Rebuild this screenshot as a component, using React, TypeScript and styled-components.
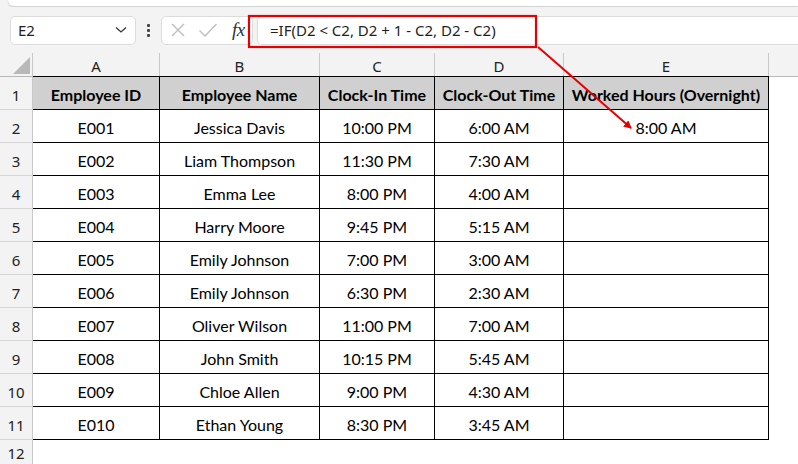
import React from "react";
import styled, { createGlobalStyle } from "styled-components";

const GlobalStyle = createGlobalStyle`
  html, body {
    margin: 0;
    padding: 0;
    background: #ffffff;
  }
  #root {
    width: 798px;
    height: 464px;
    overflow: hidden;
  }
`;

const Page = styled.div`
  position: relative;
  width: 798px;
  height: 464px;
  overflow: hidden;
  background: #ffffff;
  font-family: "Noto Sans", "Open Sans", sans-serif;
`;

const RibbonStrip = styled.div`
  height: 7px;
  background: #f3f3f3;
  padding-left: 8px;
`;

const RibbonEdge = styled.div`
  height: 6px;
  background: #ffffff;
  border-bottom-left-radius: 6px;
  box-shadow: 0 1px 2px rgba(0, 0, 0, 0.18);
`;

const FormulaBar = styled.div`
  display: flex;
  align-items: center;
  height: 46px;
  background: #f3f3f3;
  padding: 0 0 0 10px;
  box-sizing: border-box;
`;

const NameBox = styled.div`
  display: flex;
  align-items: center;
  justify-content: space-between;
  width: 126px;
  height: 29px;
  box-sizing: border-box;
  padding: 0 8px 0 7px;
  background: #ffffff;
  border: 1px solid #dcdcdc;
  border-radius: 5px;
  font-size: 15px;
  color: #1f1f1f;
`;

const Dots = styled.div`
  display: flex;
  flex-direction: column;
  gap: 2px;
  margin: 0 11px;
  span {
    width: 3px;
    height: 3px;
    background: #444;
    border-radius: 1px;
  }
`;

const FxBox = styled.div`
  display: flex;
  align-items: center;
  gap: 12px;
  width: 92px;
  height: 29px;
  box-sizing: border-box;
  padding: 0 6px 0 8px;
  background: #ffffff;
  border: 1px solid #dcdcdc;
  border-radius: 5px;
`;

const Fx = styled.span`
  font-family: "Liberation Serif", serif;
  font-style: italic;
  font-size: 19px;
  color: #333;
  margin-left: 2px;
  letter-spacing: -0.5px;
`;

const FormulaInput = styled.div`
  flex: 1;
  display: flex;
  align-items: center;
  height: 29px;
  margin-left: 4px;
  box-sizing: border-box;
  padding-left: 12px;
  background: #ffffff;
  border: 1px solid #dcdcdc;
  border-right: none;
  border-radius: 5px 0 0 5px;
  font-size: 15px;
  color: #1f1f1f;
`;

const Sheet = styled.div`
  display: grid;
  grid-template-columns: 33px 127px 160px 115px 129px 205px 1fr;
  grid-template-rows: 24px;
  grid-auto-rows: 33px;
`;

const Corner = styled.div`
  background: #f3f3f3;
  border-right: 1px solid #c8c8c8;
  border-bottom: 1px solid #b8b8b8;
  display: flex;
  align-items: flex-end;
  justify-content: flex-end;
  padding: 0 2px 2px 0;
`;

const ColHead = styled.div<{ $last?: boolean }>`
  background: #f3f3f3;
  border-right: ${(p) => (p.$last ? "none" : "1px solid #c8c8c8")};
  border-bottom: 1px solid #b8b8b8;
  display: flex;
  align-items: center;
  justify-content: center;
  font-size: 15px;
  color: #222;
  padding-top: 3px;
`;

const RowHead = styled.div<{ $tail?: boolean }>`
  background: #f3f3f3;
  border-right: 1px solid #c8c8c8;
  border-bottom: 1px solid #d6d6d6;
  display: flex;
  align-items: ${(p) => (p.$tail ? "flex-start" : "center")};
  justify-content: center;
  font-size: 15px;
  line-height: 20px;
  color: #222;
  padding-top: ${(p) => (p.$tail ? "3px" : "4px")};
`;

const Cell = styled.div<{ $head?: boolean; $top?: boolean }>`
  background: ${(p) => (p.$head ? "#d0d0d0" : "#ffffff")};
  border-right: 1px solid #000;
  border-bottom: 1px solid #000;
  margin-top: ${(p) => (p.$top ? "-1px" : "0")};
  border-top: ${(p) => (p.$top ? "1px solid #000" : "none")};
  display: flex;
  align-items: center;
  justify-content: center;
  font-family: "Lato", "Noto Sans", sans-serif;
  font-size: 16px;
  font-weight: ${(p) => (p.$head ? 700 : 400)};
  color: #000;
  white-space: nowrap;
  padding-top: 2px;
`;

const Blank = styled.div`
  background: #ffffff;
`;

const Overlay = styled.svg`
  position: absolute;
  left: 0;
  top: 0;
  pointer-events: none;
`;

const rows = [
  ["E001", "Jessica Davis", "10:00 PM", "6:00 AM", "8:00 AM"],
  ["E002", "Liam Thompson", "11:30 PM", "7:30 AM", ""],
  ["E003", "Emma Lee", "8:00 PM", "4:00 AM", ""],
  ["E004", "Harry Moore", "9:45 PM", "5:15 AM", ""],
  ["E005", "Emily Johnson", "7:00 PM", "3:00 AM", ""],
  ["E006", "Emily Johnson", "6:30 PM", "2:30 AM", ""],
  ["E007", "Oliver Wilson", "11:00 PM", "7:00 AM", ""],
  ["E008", "John Smith", "10:15 PM", "5:45 AM", ""],
  ["E009", "Chloe Allen", "9:00 PM", "4:30 AM", ""],
  ["E010", "Ethan Young", "8:30 PM", "3:45 AM", ""],
];

const headers = [
  "Employee ID",
  "Employee Name",
  "Clock-In Time",
  "Clock-Out Time",
  "Worked Hours (Overnight)",
];

function App() {
  return (
    <Page>
      <GlobalStyle />
      <RibbonStrip>
        <RibbonEdge />
      </RibbonStrip>
      <FormulaBar>
        <NameBox>
          <span>E2</span>
          <svg width="12" height="8" viewBox="0 0 12 8">
            <path d="M1 1.5 L6 6 L11 1.5" fill="none" stroke="#333" strokeWidth="1.3" />
          </svg>
        </NameBox>
        <Dots>
          <span />
          <span />
          <span />
        </Dots>
        <FxBox>
          <svg width="16" height="16" viewBox="0 0 16 16">
            <path d="M2 2 L14 14 M14 2 L2 14" stroke="#bdbdbd" strokeWidth="1.4" />
          </svg>
          <svg width="20" height="16" viewBox="0 0 20 16">
            <path d="M1.5 8.5 L7 14 L18.5 2" fill="none" stroke="#bdbdbd" strokeWidth="1.4" />
          </svg>
          <Fx>fx</Fx>
        </FxBox>
        <FormulaInput>=IF(D2 &lt; C2, D2 + 1 - C2, D2 - C2)</FormulaInput>
      </FormulaBar>
      <Sheet>
        <Corner>
          <svg width="17" height="17" viewBox="0 0 17 17">
            <polygon points="17,0 17,17 0,17" fill="#b9b9b9" />
          </svg>
        </Corner>
        {["A", "B", "C", "D", "E"].map((c) => (
          <ColHead key={c}>{c}</ColHead>
        ))}
        <ColHead $last />
        <RowHead>1</RowHead>
        {headers.map((h) => (
          <Cell key={h} $head $top>
            {h}
          </Cell>
        ))}
        <Blank />
        {rows.map((r, i) => (
          <React.Fragment key={r[0]}>
            <RowHead>{i + 2}</RowHead>
            {r.map((v, j) => (
              <Cell key={j}>{v}</Cell>
            ))}
            <Blank />
          </React.Fragment>
        ))}
        <RowHead $tail>12</RowHead>
      </Sheet>
      <Overlay width="798" height="464" viewBox="0 0 798 464">
        <defs>
          <marker id="head" markerWidth="8" markerHeight="8" refX="7" refY="4" orient="auto" markerUnits="userSpaceOnUse">
            <path d="M0 0 L8 4 L0 8 Z" fill="#e60000" />
          </marker>
        </defs>
        <rect x="249" y="16" width="287" height="31" fill="none" stroke="#e60000" strokeWidth="2.2" />
        <line x1="538" y1="47" x2="631" y2="128" stroke="#e60000" strokeWidth="2" markerEnd="url(#head)" />
      </Overlay>
    </Page>
  );
}

export default App;
